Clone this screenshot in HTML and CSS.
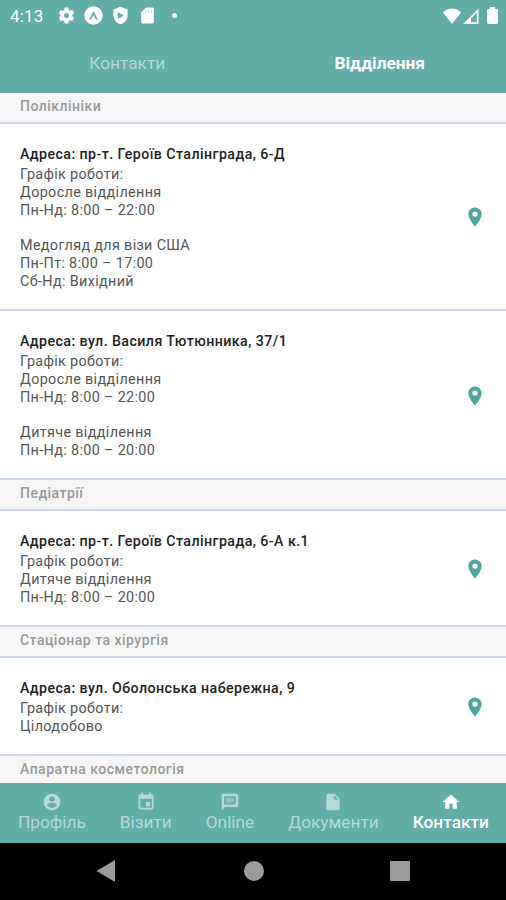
FILE: index.html
```html
<!DOCTYPE html>
<html lang="uk">
  <head>
    <meta charset="UTF-8" />
    <meta name="viewport" content="width=device-width, initial-scale=1.0" />
    <title>Контакти</title>
    <link rel="stylesheet" href="styles.css">
  </head>
  <body>
    <svg class="sprite">
      <symbol id="pin" viewBox="0 0 24 24">
        <path d="M12 1.500C7.900 1.500 4.700 4.800 4.700 8.800 4.700 14.300 12 22.500 12 22.500s7.300-8.200 7.300-13.700c0-4-3.200-7.300-7.300-7.300zm0 10.200a2.900 2.900 0 1 1 0-5.800 2.900 2.900 0 0 1 0 5.800z"/>
      </symbol>
    </svg>

    <div class="screen">
      <header class="header">
        <div class="status-bar">
          <span class="clock">4:13</span>
          <svg class="status-icon gear" viewBox="0 0 24 24"><path d="M19.43 12.98c.04-.32.07-.64.07-.98s-.03-.66-.07-.98l2.11-1.65c.19-.15.24-.42.12-.64l-2-3.46c-.12-.22-.39-.3-.61-.22l-2.49 1c-.52-.4-1.08-.73-1.69-.98l-.38-2.65C14.46 2.18 14.25 2 14 2h-4c-.25 0-.46.18-.49.42l-.38 2.65c-.61.25-1.17.59-1.69.98l-2.49-1c-.23-.09-.49 0-.61.22l-2 3.46c-.13.22-.07.49.12.64l2.11 1.65c-.04.32-.07.65-.07.98s.03.66.07.98l-2.11 1.65c-.19.15-.24.42-.12.64l2 3.46c.12.22.39.3.61.22l2.49-1c.52.4 1.08.73 1.69.98l.38 2.65c.03.24.24.42.49.42h4c.25 0 .46-.18.49-.42l.38-2.65c.61-.25 1.17-.59 1.69-.98l2.49 1c.23.09.49 0 .61-.22l2-3.46c.12-.22.07-.49-.12-.64l-2.11-1.65zM12 15.2a3.2 3.2 0 1 1 0-6.4 3.2 3.2 0 0 1 0 6.4z"/></svg>
          <svg class="status-icon expo" viewBox="0 0 20 20"><circle cx="10" cy="10" r="9.7"/><path class="cutout" d="M5.4 13.8C7.3 11.4 8.3 8.4 9.3 6.3c.3-.5 1.1-.5 1.4 0 1 2.1 2 5.1 3.9 7.5-.6 1-1.5.9-2 .1L10 9.8l-2.6 4.1c-.5.8-1.4.9-2-.1z"/></svg>
          <svg class="status-icon shield" viewBox="0 0 24 24"><path d="M12 1 3 4.500V11c0 5.600 3.800 10.700 9 12 5.200-1.300 9-6.400 9-12V4.500L12 1z"/><path class="cutout" d="M8.500 8 16.500 12l-8 4z"/></svg>
          <svg class="status-icon card" viewBox="0 0 24 24"><path d="M18 2h-8L4 8v12c0 1.100.9 2 2 2h12c1.100 0 2-.9 2-2V4c0-1.100-.9-2-2-2z"/><path class="cutout slots" d="M10 5.500v3M13.500 5.500v3M17 5.500v3"/></svg>
          <span class="dot"></span>
          <div class="signals">
            <svg class="wifi" viewBox="0 0 18 16"><path d="M9 16 0 4.500C2.500 1.700 5.600.5 9 .5s6.500 1.200 9 4z"/></svg>
            <svg class="cell" viewBox="0 0 16 16"><path fill-rule="evenodd" d="M0 16 15.500.5V16zM8 10.500V14.300H13.800V4.500z"/></svg>
            <svg class="battery" viewBox="0 0 11 17"><path d="M3 0h5v2h1.500c.8 0 1.500.7 1.500 1.500v12c0 .8-.7 1.500-1.500 1.500h-8C.7 17 0 16.300 0 15.500v-12C0 2.700.7 2 1.500 2H3z"/></svg>
          </div>
        </div>
        <nav class="top-tabs">
          <a class="top-tab">Контакти</a>
          <a class="top-tab active">Відділення</a>
        </nav>
      </header>

      <main class="list">
        <h2 class="section-title">Поліклініки</h2>
        <article class="branch">
          <div class="branch-info">
            <h3>Адреса: пр-т. Героїв Сталінграда, 6-Д</h3>
            <p>Графік роботи:<br>Доросле відділення<br>Пн-Нд: 8:00 – 22:00<br><br>Медогляд для візи США<br>Пн-Пт: 8:00 – 17:00<br>Сб-Нд: Вихідний</p>
          </div>
          <svg class="pin"><use href="#pin"/></svg>
        </article>
        <article class="branch">
          <div class="branch-info">
            <h3>Адреса: вул. Василя Тютюнника, 37/1</h3>
            <p>Графік роботи:<br>Доросле відділення<br>Пн-Нд: 8:00 – 22:00<br><br>Дитяче відділення<br>Пн-Нд: 8:00 – 20:00</p>
          </div>
          <svg class="pin"><use href="#pin"/></svg>
        </article>

        <h2 class="section-title">Педіатрії</h2>
        <article class="branch">
          <div class="branch-info">
            <h3>Адреса: пр-т. Героїв Сталінграда, 6-А к.1</h3>
            <p>Графік роботи:<br>Дитяче відділення<br>Пн-Нд: 8:00 – 20:00</p>
          </div>
          <svg class="pin"><use href="#pin"/></svg>
        </article>

        <h2 class="section-title">Стаціонар та хірургія</h2>
        <article class="branch">
          <div class="branch-info">
            <h3>Адреса: вул. Оболонська набережна, 9</h3>
            <p>Графік роботи:<br>Цілодобово</p>
          </div>
          <svg class="pin"><use href="#pin"/></svg>
        </article>

        <h2 class="section-title">Апаратна косметологія</h2>
      </main>

      <nav class="tab-bar">
        <a class="tab">
          <svg viewBox="0 0 24 24"><path d="M12 2a10 10 0 1 0 0 20 10 10 0 0 0 0-20zm0 3a3.200 3.200 0 1 1 0 6.400A3.200 3.200 0 0 1 12 5zm0 14.200a7.200 7.200 0 0 1-6-3.220c.03-1.990 4-3.080 6-3.080s5.970 1.090 6 3.080a7.200 7.200 0 0 1-6 3.220z"/></svg>
          <span>Профіль</span>
        </a>
        <a class="tab">
          <svg viewBox="0 0 24 24"><path d="M17 12h-5v5h5v-5zM16 1v2H8V1H6v2H5c-1.110 0-1.990.9-1.990 2L3 19a2 2 0 0 0 2 2h14c1.100 0 2-.9 2-2V5c0-1.100-.9-2-2-2h-1V1h-2zm3 18H5V8h14v11z"/></svg>
          <span>Візити</span>
        </a>
        <a class="tab">
          <svg viewBox="0 0 24 24"><path fill-rule="evenodd" d="M20 2H4c-1.100 0-2 .9-2 2v18l4-4h14c1.100 0 2-.9 2-2V4c0-1.100-.9-2-2-2zM5 5h14v10H5z"/><path d="M7 7h7v2l3-2v6l-3-2v2H7z" opacity=".5"/></svg>
          <span>Online</span>
        </a>
        <a class="tab">
          <svg viewBox="0 0 24 24"><path d="M6 2c-1.100 0-1.990.9-1.990 2L4 20c0 1.100.89 2 1.990 2H18c1.100 0 2-.9 2-2V8l-6-6H6zm7 7V3.500L18.500 9H13z"/></svg>
          <span>Документи</span>
        </a>
        <a class="tab active">
          <svg viewBox="0 0 24 24"><path d="M10 20v-6h4v6h5v-8h3L12 3 2 12h3v8z"/></svg>
          <span>Контакти</span>
        </a>
      </nav>

      <div class="system-nav">
        <svg viewBox="0 0 24 24"><path d="M1.500 12 20 1v22z"/></svg>
        <svg viewBox="0 0 24 24"><circle cx="12" cy="12" r="10"/></svg>
        <svg viewBox="0 0 24 24"><rect x="2" y="2" width="20" height="20" rx="1"/></svg>
      </div>
    </div>
  </body>
</html>
```
FILE: styles.css
```css
* {
  margin: 0;
  padding: 0;
  box-sizing: border-box;
}

body {
  font-family: Roboto, "Noto Sans", sans-serif;
  background: #fff;
}

.sprite {
  display: none;
}

.screen {
  width: 506px;
  height: 900px;
  display: flex;
  flex-direction: column;
  overflow: hidden;
}

/* Header */
.header {
  height: 93px;
  flex-shrink: 0;
  background: #62ada8;
  color: #fff;
}

.status-bar {
  height: 31px;
  padding: 0 8px 0 10px;
  display: flex;
  align-items: center;
  fill: #fff;
}

.clock {
  width: 47px;
  font-size: 17px;
  letter-spacing: 0.2px;
}

.status-icon {
  width: 19px;
  height: 19px;
  margin-right: 8px;
}

.cutout {
  fill: #62ada8;
}

.slots {
  stroke: #62ada8;
  stroke-width: 0.6;
}

.dot {
  width: 5px;
  height: 5px;
  margin-left: 7px;
  border-radius: 50%;
  background: #fff;
}

.signals {
  margin-left: auto;
  display: flex;
  align-items: center;
}

.wifi {
  width: 18px;
  height: 16px;
  margin-right: 2px;
}

.cell {
  width: 16px;
  height: 16px;
  margin-right: 8px;
}

.battery {
  width: 11px;
  height: 17px;
}

.top-tabs {
  height: 64px;
  padding-left: 1px;
  display: flex;
  align-items: center;
}

.top-tab {
  flex: 1;
  text-align: center;
  font-size: 17.3px;
  color: #b5d9d6;
}

.top-tab.active {
  color: #fff;
  font-weight: 700;
}

/* Branch list */
.list {
  flex: 1;
  min-height: 0;
  overflow: hidden;
}

.section-title {
  height: 31px;
  padding: 0 20px 2px;
  border-bottom: 2px solid #ccd7e7;
  background: #f6f6f6;
  color: #999;
  font-size: 14px;
  font-weight: 500;
  line-height: 27px;
  letter-spacing: 0.48px;
}

.branch {
  padding: 20px 20px 18.2px;
  border-bottom: 2px solid #ccd7e7;
  display: flex;
  align-items: center;
  justify-content: space-between;
}

.branch-info h3 {
  margin-bottom: 1.5px;
  color: #222;
  font-size: 14.2px;
  font-weight: 500;
  line-height: 20.5px;
  letter-spacing: 0.44px;
}

.branch-info p {
  color: #555;
  font-size: 14.4px;
  line-height: 17.85px;
  letter-spacing: 0.33px;
}

.pin {
  width: 22px;
  height: 22px;
  flex-shrink: 0;
  fill: #50a79d;
}

/* Bottom tabs */
.tab-bar {
  height: 60px;
  flex-shrink: 0;
  display: flex;
  justify-content: space-around;
  padding: 9px 0 0 1px;
  background: #62ada8;
}

.tab {
  display: flex;
  flex-direction: column;
  align-items: center;
  color: #b5d9d6;
  fill: #b5d9d6;
  font-size: 17.3px;
  line-height: 20px;
}

.tab svg {
  width: 20px;
  height: 20px;
}

.tab.active {
  color: #fff;
  fill: #fff;
  font-weight: 500;
}

/* Android navigation */
.system-nav {
  height: 57px;
  flex-shrink: 0;
  padding: 0 94px 2px 95px;
  display: flex;
  align-items: center;
  justify-content: space-between;
  background: #000;
  fill: #9b9b9b;
}

.system-nav svg {
  width: 24px;
  height: 24px;
}
```
